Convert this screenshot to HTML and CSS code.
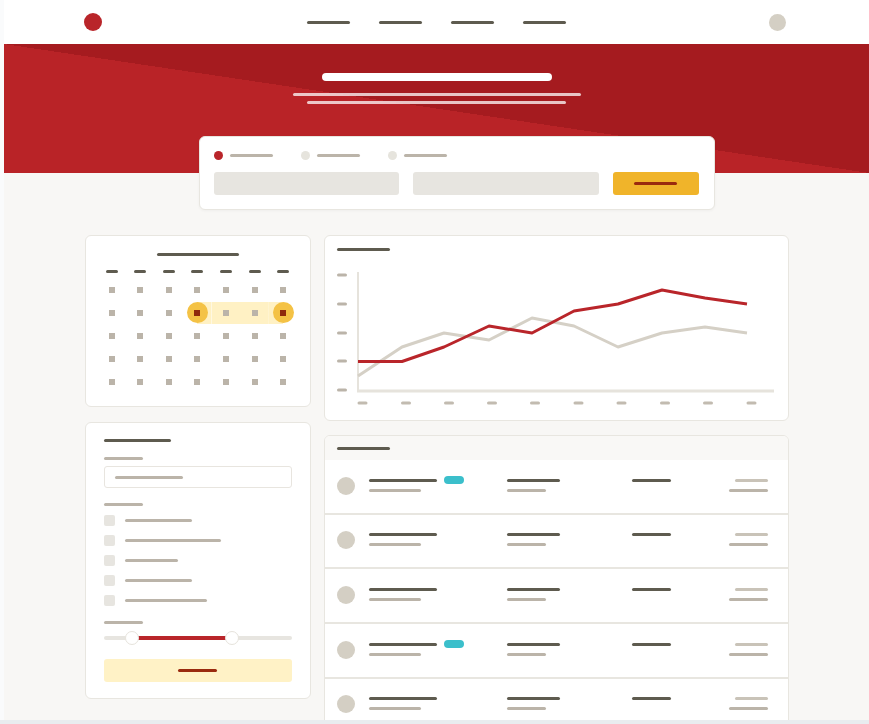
FILE: index.html
```html
<!DOCTYPE html>
<html lang="en">
<head>
    <meta charset="UTF-8">
    <meta name="viewport" content="width=device-width, initial-scale=1.0">
    <title>Booking Dashboard</title>
    <link rel="stylesheet" href="styles.css">
</head>
<body>
    <div class="page">
        <header class="topbar">
            <div class="topbar-inner">
                <span class="logo"></span>
                <nav class="nav">
                    <span class="bar dark nav-link"></span>
                    <span class="bar dark nav-link"></span>
                    <span class="bar dark nav-link"></span>
                    <span class="bar dark nav-link"></span>
                </nav>
                <span class="avatar"></span>
            </div>
        </header>

        <section class="hero">
            <div class="hero-title"></div>
            <div class="hero-line hero-line-1"></div>
            <div class="hero-line hero-line-2"></div>
        </section>

        <main class="container">
            <div class="card search-card">
                <div class="search-tabs">
                    <div class="tab active"><span class="dot"></span><span class="bar gray w43"></span></div>
                    <div class="tab"><span class="dot"></span><span class="bar gray w43"></span></div>
                    <div class="tab"><span class="dot"></span><span class="bar gray w43"></span></div>
                </div>
                <div class="search-fields">
                    <div class="field"></div>
                    <div class="field"></div>
                    <button class="search-btn"><span class="bar btn-bar w43"></span></button>
                </div>
            </div>

            <div class="dashboard">
                <div class="column">
                    <div class="card calendar">
                        <span class="bar dark cal-title"></span>
                        <div class="cal-week">
                            <span><i></i></span><span><i></i></span><span><i></i></span><span><i></i></span><span><i></i></span><span><i></i></span><span><i></i></span>
                        </div>
                        <div class="cal-days">
                            <div class="cal-row">
                                <span class="day"><i></i></span><span class="day"><i></i></span><span class="day"><i></i></span><span class="day"><i></i></span><span class="day"><i></i></span><span class="day"><i></i></span><span class="day"><i></i></span>
                            </div>
                            <div class="cal-row">
                                <span class="day"><i></i></span><span class="day"><i></i></span><span class="day"><i></i></span>
                                <span class="day range-start"><span class="sel"><i></i></span></span>
                                <span class="day range-mid"><i></i></span><span class="day range-mid"><i></i></span>
                                <span class="day range-end"><span class="sel"><i></i></span></span>
                            </div>
                            <div class="cal-row">
                                <span class="day"><i></i></span><span class="day"><i></i></span><span class="day"><i></i></span><span class="day"><i></i></span><span class="day"><i></i></span><span class="day"><i></i></span><span class="day"><i></i></span>
                            </div>
                            <div class="cal-row">
                                <span class="day"><i></i></span><span class="day"><i></i></span><span class="day"><i></i></span><span class="day"><i></i></span><span class="day"><i></i></span><span class="day"><i></i></span><span class="day"><i></i></span>
                            </div>
                            <div class="cal-row">
                                <span class="day"><i></i></span><span class="day"><i></i></span><span class="day"><i></i></span><span class="day"><i></i></span><span class="day"><i></i></span><span class="day"><i></i></span><span class="day"><i></i></span>
                            </div>
                        </div>
                    </div>

                    <div class="card filters">
                        <span class="bar dark w67"></span>
                        <span class="bar gray w39 label"></span>
                        <div class="filter-input"><span class="bar gray w68"></span></div>
                        <span class="bar gray w39 label"></span>
                        <div class="checks">
                            <div class="check-row"><span class="box"></span><span class="bar gray w67"></span></div>
                            <div class="check-row"><span class="box"></span><span class="bar gray w96"></span></div>
                            <div class="check-row"><span class="box"></span><span class="bar gray w53"></span></div>
                            <div class="check-row"><span class="box"></span><span class="bar gray w67"></span></div>
                            <div class="check-row"><span class="box"></span><span class="bar gray w82"></span></div>
                        </div>
                        <span class="bar gray w39 label label-range"></span>
                        <div class="slider">
                            <div class="slider-track">
                                <span class="slider-fill"></span>
                                <span class="thumb thumb-min"></span>
                                <span class="thumb thumb-max"></span>
                            </div>
                        </div>
                        <div class="apply-btn"><span class="bar btn-bar w39"></span></div>
                    </div>
                </div>

                <div class="column">
                    <div class="card chart-card">
                        <span class="bar dark w53 chart-title"></span>
                        <svg class="chart" width="463" height="160" viewBox="325 260 463 160">
                            <g stroke="#bbb4a9" stroke-width="3" stroke-linecap="round">
                                <line x1="338.5" y1="275" x2="345.5" y2="275"/>
                                <line x1="338.5" y1="304" x2="345.5" y2="304"/>
                                <line x1="338.5" y1="333" x2="345.5" y2="333"/>
                                <line x1="338.5" y1="361" x2="345.5" y2="361"/>
                                <line x1="338.5" y1="390" x2="345.5" y2="390"/>
                            </g>
                            <line x1="358" y1="272" x2="358" y2="392" stroke="#e6e3dc" stroke-width="2"/>
                            <line x1="357" y1="391" x2="774" y2="391" stroke="#e6e3dc" stroke-width="3"/>
                            <g stroke="#c2bbb0" stroke-width="3" stroke-linecap="round">
                                <line x1="359" y1="403" x2="366" y2="403"/>
                                <line x1="402.5" y1="403" x2="409.5" y2="403"/>
                                <line x1="445.5" y1="403" x2="452.5" y2="403"/>
                                <line x1="488.5" y1="403" x2="495.5" y2="403"/>
                                <line x1="531.5" y1="403" x2="538.5" y2="403"/>
                                <line x1="575" y1="403" x2="582" y2="403"/>
                                <line x1="618" y1="403" x2="625" y2="403"/>
                                <line x1="661.5" y1="403" x2="668.5" y2="403"/>
                                <line x1="704.5" y1="403" x2="711.5" y2="403"/>
                                <line x1="748" y1="403" x2="755" y2="403"/>
                            </g>
                            <polyline fill="none" stroke="#d5d0c6" stroke-width="3" stroke-linejoin="round"
                                points="358,376 402,347 444,333 489,340 532,318 574,326 618,347 662,333 705,327 747,333"/>
                            <polyline fill="none" stroke="#b9252a" stroke-width="3" stroke-linejoin="round"
                                points="358,361.5 402,361.5 444,347 489,326 532,333 574,311 618,304 662,290 705,298 747,304"/>
                        </svg>
                    </div>

                    <div class="card table-card">
                        <div class="table-head"><span class="bar dark w53"></span></div>
                        <div class="table-row">
                            <span class="row-avatar"></span>
                            <div class="cell">
                                <div class="cell-top"><span class="bar dark w68"></span><span class="badge"></span></div>
                                <span class="bar gray w52"></span>
                            </div>
                            <div class="cell"><span class="bar dark w53"></span><span class="bar gray w39"></span></div>
                            <div class="cell"><span class="bar dark w39"></span></div>
                            <div class="cell cell-end"><span class="bar light w33"></span><span class="bar gray w39"></span></div>
                        </div>
                        <div class="table-row">
                            <span class="row-avatar"></span>
                            <div class="cell">
                                <div class="cell-top"><span class="bar dark w68"></span></div>
                                <span class="bar gray w52"></span>
                            </div>
                            <div class="cell"><span class="bar dark w53"></span><span class="bar gray w39"></span></div>
                            <div class="cell"><span class="bar dark w39"></span></div>
                            <div class="cell cell-end"><span class="bar light w33"></span><span class="bar gray w39"></span></div>
                        </div>
                        <div class="table-row">
                            <span class="row-avatar"></span>
                            <div class="cell">
                                <div class="cell-top"><span class="bar dark w68"></span></div>
                                <span class="bar gray w52"></span>
                            </div>
                            <div class="cell"><span class="bar dark w53"></span><span class="bar gray w39"></span></div>
                            <div class="cell"><span class="bar dark w39"></span></div>
                            <div class="cell cell-end"><span class="bar light w33"></span><span class="bar gray w39"></span></div>
                        </div>
                        <div class="table-row">
                            <span class="row-avatar"></span>
                            <div class="cell">
                                <div class="cell-top"><span class="bar dark w68"></span><span class="badge"></span></div>
                                <span class="bar gray w52"></span>
                            </div>
                            <div class="cell"><span class="bar dark w53"></span><span class="bar gray w39"></span></div>
                            <div class="cell"><span class="bar dark w39"></span></div>
                            <div class="cell cell-end"><span class="bar light w33"></span><span class="bar gray w39"></span></div>
                        </div>
                        <div class="table-row">
                            <span class="row-avatar"></span>
                            <div class="cell">
                                <div class="cell-top"><span class="bar dark w68"></span></div>
                                <span class="bar gray w52"></span>
                            </div>
                            <div class="cell"><span class="bar dark w53"></span><span class="bar gray w39"></span></div>
                            <div class="cell"><span class="bar dark w39"></span></div>
                            <div class="cell cell-end"><span class="bar light w33"></span><span class="bar gray w39"></span></div>
                        </div>
                    </div>
                </div>
            </div>
        </main>
    </div>
    <div class="scroll-edge"></div>
</body>
</html>
```

FILE: styles.css
```css
body {
    margin: 0;
    padding: 0;
    font-family: 'Liberation Sans', Arial, sans-serif;
    background-color: #fafbfc;
}
.page {
    margin-left: 4px;
    height: 720px;
    overflow: hidden;
    background-color: #f8f7f5;
}
.scroll-edge {
    height: 4px;
    background-color: #e9ecef;
}

/* skeleton bars */
.bar {
    display: block;
    height: 3px;
    border-radius: 2px;
    flex-shrink: 0;
}
.bar.dark {
    background-color: #5e5b4f;
}
.bar.gray {
    background-color: #bbb4a9;
}
.bar.light {
    background-color: #c9c3b8;
}
.bar.btn-bar {
    background-color: #9a2a0e;
}
.w33 { width: 33px; }
.w39 { width: 39px; }
.w43 { width: 43px; }
.w52 { width: 52px; }
.w53 { width: 53px; }
.w67 { width: 67px; }
.w68 { width: 68px; }
.w82 { width: 82px; }
.w96 { width: 96px; }

.card {
    background-color: #fff;
    border: 1px solid #e8e6e0;
    border-radius: 6px;
    box-sizing: border-box;
}

/* top bar */
.topbar {
    background-color: #fff;
    height: 44px;
}
.topbar-inner {
    width: 706px;
    height: 44px;
    margin: 0 auto;
    display: grid;
    grid-template-columns: 1fr auto 1fr;
    align-items: center;
}
.logo {
    width: 18px;
    height: 18px;
    border-radius: 50%;
    background-color: #b9252a;
}
.nav {
    display: flex;
    gap: 29px;
}
.nav-link {
    width: 43px;
}
.avatar {
    justify-self: end;
    margin-right: 4px;
    width: 17px;
    height: 17px;
    border-radius: 50%;
    background-color: #d4cfc4;
}

/* hero */
.hero {
    height: 129px;
    box-sizing: border-box;
    padding-top: 28.5px;
    background: linear-gradient(to top right, #b92327 50%, #a51b1f 50%);
    display: flex;
    flex-direction: column;
    align-items: center;
}
.hero-title {
    width: 230px;
    height: 8px;
    border-radius: 4px;
    background-color: #fff;
}
.hero-line {
    height: 3px;
    border-radius: 2px;
    background-color: rgba(255, 255, 255, 0.75);
}
.hero-line-1 {
    width: 288px;
    margin-top: 12px;
}
.hero-line-2 {
    width: 259px;
    margin-top: 5.5px;
}

.container {
    width: 704px;
    margin: 0 auto;
}

/* search */
.search-card {
    width: 516px;
    margin: -37px 0 0 114px;
    padding: 14px 15px 14px 14px;
    box-shadow: 0 1px 3px rgba(0, 0, 0, 0.04);
}
.search-tabs {
    display: flex;
    gap: 28px;
    height: 9px;
}
.tab {
    display: flex;
    align-items: center;
    gap: 7px;
}
.dot {
    width: 9px;
    height: 9px;
    border-radius: 50%;
    background-color: #e6e4dd;
}
.tab.active .dot {
    background-color: #b9252a;
}
.search-fields {
    display: grid;
    grid-template-columns: 1fr 1fr 86px;
    gap: 14px;
    margin-top: 12px;
}
.field {
    height: 23px;
    border-radius: 3px;
    background-color: #e7e5e0;
}
.search-btn {
    height: 23px;
    border: none;
    border-radius: 3px;
    background-color: #f0b42a;
    display: flex;
    align-items: center;
    justify-content: center;
    padding: 0;
}

.dashboard {
    display: grid;
    grid-template-columns: 226px 465px;
    gap: 13px;
    margin-top: 25px;
    align-items: start;
}
.column {
    display: flex;
    flex-direction: column;
}

/* calendar */
.calendar {
    height: 172px;
    padding: 17px 12px 0;
    display: flex;
    flex-direction: column;
    align-items: center;
}
.cal-title {
    width: 82px;
}
.cal-week,
.cal-row {
    display: grid;
    grid-template-columns: repeat(7, 1fr);
    width: 100%;
}
.cal-week {
    margin-top: 14px;
    height: 3px;
}
.cal-week span {
    display: flex;
    justify-content: center;
}
.cal-week i {
    display: block;
    width: 12px;
    height: 3px;
    border-radius: 2px;
    background-color: #5e5b4f;
}
.cal-days {
    width: 100%;
    margin-top: 5.5px;
}
.day {
    height: 22.9px;
    display: flex;
    align-items: center;
    justify-content: center;
}
.day i {
    display: block;
    width: 6px;
    height: 6px;
    background-color: #bbb4a9;
}
.range-mid {
    background: linear-gradient(#fff1c4, #fff1c4) center / 100% 22px no-repeat;
}
.range-start {
    background: linear-gradient(#fff1c4, #fff1c4) right center / 50% 22px no-repeat;
}
.range-end {
    background: linear-gradient(#fff1c4, #fff1c4) left center / 50% 22px no-repeat;
}
.sel {
    width: 21px;
    height: 21px;
    border-radius: 50%;
    background-color: #f4c245;
    display: flex;
    align-items: center;
    justify-content: center;
}
.sel i {
    background-color: #8f2a0c;
}

/* filters */
.filters {
    margin-top: 15px;
    height: 277px;
    padding: 16px 18px 0;
}
.filters .label {
    margin-top: 15px;
}
.filter-input {
    margin-top: 6px;
    height: 22px;
    box-sizing: border-box;
    border: 1.5px solid #e8e5df;
    border-radius: 3px;
    padding-left: 10px;
    display: flex;
    align-items: center;
}
.checks {
    margin-top: 4.5px;
}
.check-row {
    height: 20px;
    display: flex;
    align-items: center;
    gap: 10.5px;
}
.box {
    width: 11px;
    height: 11px;
    border-radius: 2px;
    background-color: #e7e5e0;
}
.filters .label-range {
    margin-top: 10.5px;
}
.slider {
    margin-top: 7px;
    height: 14px;
    display: flex;
    align-items: center;
}
.slider-track {
    position: relative;
    width: 100%;
    height: 4px;
    border-radius: 2px;
    background-color: #e7e5e0;
}
.slider-fill {
    position: absolute;
    top: 0;
    left: 28px;
    width: 101px;
    height: 4px;
    background-color: #b9252a;
}
.thumb {
    position: absolute;
    top: -5px;
    width: 14px;
    height: 14px;
    margin-left: -7px;
    box-sizing: border-box;
    border-radius: 50%;
    background-color: #fff;
    border: 1.5px solid #e6e3dc;
}
.thumb-min {
    left: 28.5px;
}
.thumb-max {
    left: 128.5px;
}
.apply-btn {
    margin-top: 14px;
    height: 23px;
    border-radius: 3px;
    background-color: #fff2c6;
    display: flex;
    align-items: center;
    justify-content: center;
}

/* chart */
.chart-card {
    height: 186px;
    padding-top: 12px;
}
.chart-title {
    margin-left: 12px;
}
.chart {
    display: block;
    margin-top: 9px;
}

/* table */
.table-card {
    margin-top: 14px;
    overflow: hidden;
}
.table-head {
    height: 24px;
    box-sizing: border-box;
    padding: 10.5px 12px 0;
    background-color: #f9f8f6;
}
.table-row {
    height: 54.7px;
    box-sizing: border-box;
    border-bottom: 2px solid #e8e6e0;
    padding: 18.5px 20px 0 12px;
    display: grid;
    grid-template-columns: 32px 138px 125px 1fr auto;
    align-items: start;
}
.row-avatar {
    width: 18px;
    height: 18px;
    margin-top: -2px;
    border-radius: 50%;
    background-color: #d4cfc4;
}
.cell {
    display: flex;
    flex-direction: column;
    gap: 7px;
}
.cell-end {
    align-items: flex-end;
}
.cell-top {
    display: flex;
    align-items: center;
    gap: 7.5px;
    height: 3px;
}
.badge {
    width: 20px;
    height: 8px;
    border-radius: 4px;
    background-color: #3bbfcb;
    flex-shrink: 0;
}
```
